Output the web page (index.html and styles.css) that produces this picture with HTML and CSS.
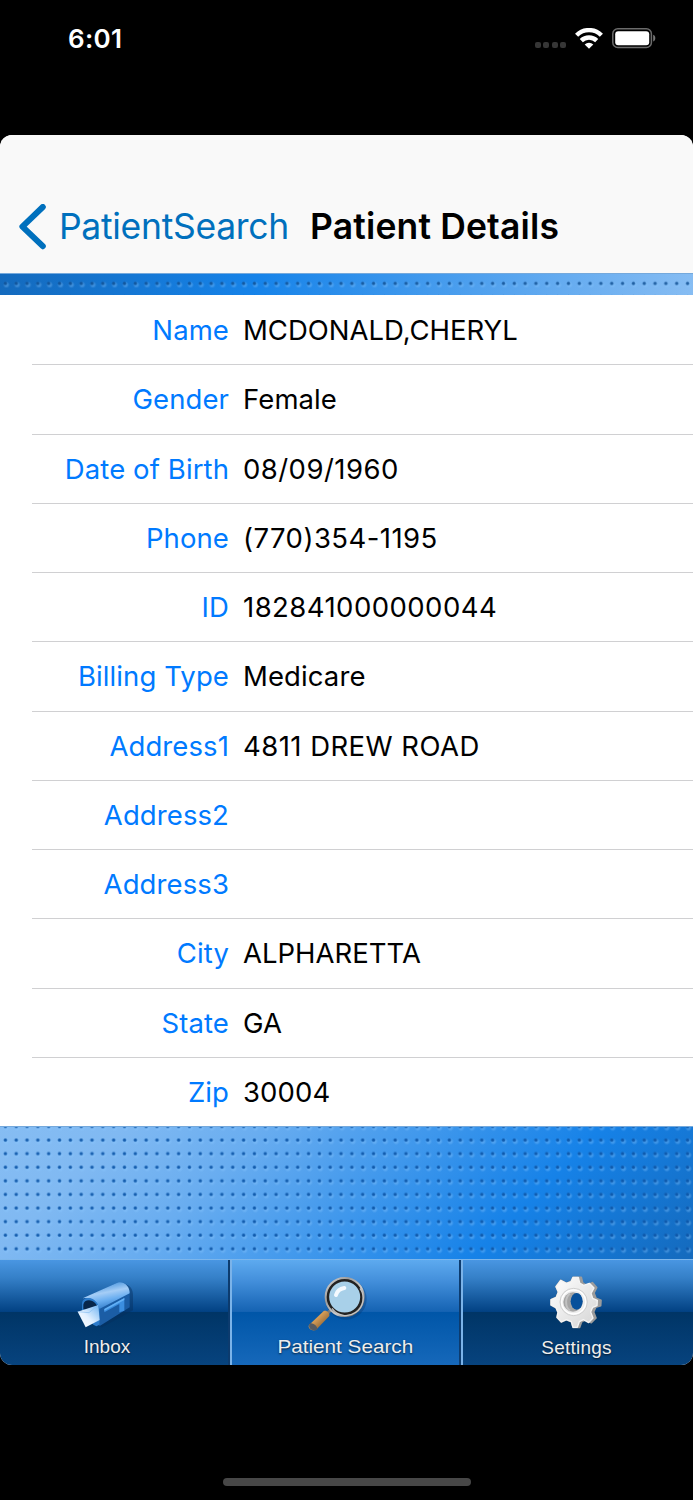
FILE: index.html
```html
<!DOCTYPE html>
<html lang="en">
<head>
    <meta charset="UTF-8">
    <meta name="viewport" content="width=device-width, initial-scale=1.0">
    <title>Patient Details</title>
    <link rel="stylesheet" href="styles.css">
</head>
<body>
    <div class="status-bar">
        <span class="time">6:01</span>
        <div class="status-icons">
            <div class="signal"><i></i><i></i><i></i><i></i></div>
            <svg class="wifi" width="28" height="21" viewBox="0 0 28 21">
                <g fill="none" stroke="#fff" stroke-width="4.4">
                    <path d="M1.6 7.2a17.6 17.6 0 0 1 24.8 0"/>
                    <path d="M6.3 12.6a11 11 0 0 1 15.4 0"/>
                </g>
                <path d="M14 20.8l-4.3-4.4a6.2 6.2 0 0 1 8.6 0z" fill="#fff"/>
            </svg>
            <svg class="battery" width="44" height="21" viewBox="0 0 44 21">
                <rect x=".8" y=".8" width="38.6" height="18.6" rx="5" fill="none" stroke="#6b6b6b" stroke-width="1.5"/>
                <rect x="3.2" y="3.2" width="34" height="14" rx="3" fill="#fff"/>
                <path d="M41.2 6.8c2.8 1 2.8 5.8 0 6.8z" fill="#777"/>
            </svg>
        </div>
    </div>

    <div class="app">
        <header class="nav-bar">
            <svg class="chevron" width="28" height="46" viewBox="0 0 28 46">
                <path d="M23.8 3L3.4 22.6l20.4 19.6" fill="none" stroke="#0070bd" stroke-width="6" stroke-linecap="round" stroke-linejoin="round"/>
            </svg>
            <a class="back">PatientSearch</a>
            <h1>Patient Details</h1>
        </header>
        <div class="band band-top"></div>

        <main class="details">
            <div class="row"><span class="label">Name</span><span class="value caps">MCDONALD,CHERYL</span></div>
            <div class="row"><span class="label">Gender</span><span class="value">Female</span></div>
            <div class="row"><span class="label">Date of Birth</span><span class="value digits">08/09/1960</span></div>
            <div class="row"><span class="label">Phone</span><span class="value digits">(770)354-1195</span></div>
            <div class="row"><span class="label">ID</span><span class="value digits">182841000000044</span></div>
            <div class="row"><span class="label">Billing Type</span><span class="value">Medicare</span></div>
            <div class="row"><span class="label">Address1</span><span class="value digits">4811 DREW ROAD</span></div>
            <div class="row"><span class="label">Address2</span><span class="value"></span></div>
            <div class="row"><span class="label">Address3</span><span class="value"></span></div>
            <div class="row"><span class="label">City</span><span class="value caps">ALPHARETTA</span></div>
            <div class="row"><span class="label">State</span><span class="value">GA</span></div>
            <div class="row"><span class="label">Zip</span><span class="value">30004</span></div>
        </main>

        <div class="band band-bottom"></div>

        <nav class="tab-bar">
            <div class="tab inbox">
                <svg width="60" height="50" viewBox="0 0 180 150">
                    <defs>
                        <linearGradient id="boxTop" x1=".3" y1="0" x2=".65" y2="1">
                            <stop offset="0" stop-color="#2f86d8"/>
                            <stop offset=".4" stop-color="#a5cdf6"/>
                            <stop offset=".65" stop-color="#6aaef0"/>
                            <stop offset="1" stop-color="#2a75c4"/>
                        </linearGradient>
                        <linearGradient id="letter" x1="0" y1="1" x2="1" y2="0">
                            <stop offset="0" stop-color="#fff"/>
                            <stop offset=".45" stop-color="#e3f1ff"/>
                            <stop offset="1" stop-color="#6db2f2"/>
                        </linearGradient>
                    </defs>
                    <path d="M24 72c0-14 10-19 22-18L130 12c22-8 38 10 37 32v44L74 139l-10-4z" fill="#062f5d" opacity=".45" transform="translate(4 3)"/>
                    <path d="M22 70c-2-12 8-19 20-23L124 8c22-7 38 12 37 34v40L70 139V94z" fill="#1b5da5"/>
                    <path d="M20 55L124 8c20-7 38 12 37 32L70 87C66 66 48 50 20 55z" fill="url(#boxTop)"/>
                    <path d="M18 90V71c0-22 31-22 42-6 8 9 11 19 11 31v38l-10 5-9-5z" fill="#2c7bcb"/>
                    <path d="M22 88V74c2-16 25-17 36-4 7 8 9 17 9 30z" fill="#08264a"/>
                    <path d="M5 95l62-20 4 45-42 22z" fill="url(#letter)"/>
                    <path d="M5 95l34 3 28-23" fill="none" stroke="#86bdf0" stroke-width="2"/>
                    <path d="M85 87l60-33v38l-15 5V72L85 97z" fill="#3b8ee0"/>
                    <path d="M85 87l60-33v6L85 92z" fill="#63b0f5"/>
                </svg>
                <span>Inbox</span>
            </div>
            <div class="tab search active">
                <svg width="64" height="58" viewBox="0 0 192 174">
                    <defs>
                        <linearGradient id="rim" x1="0" y1="0" x2="1" y2="1">
                            <stop offset="0" stop-color="#ddd"/>
                            <stop offset=".3" stop-color="#9b9b9b"/>
                            <stop offset=".6" stop-color="#ccc"/>
                            <stop offset="1" stop-color="#333"/>
                        </linearGradient>
                        <linearGradient id="wood" x1="0" y1="0" x2="1" y2="1">
                            <stop offset="0" stop-color="#8a5c2d"/>
                            <stop offset=".4" stop-color="#d39b56"/>
                            <stop offset="1" stop-color="#60401f"/>
                        </linearGradient>
                    </defs>
                    <circle cx="129" cy="72" r="56" fill="none" stroke="#06366f" stroke-width="12" opacity=".35"/>
                    <path d="M88 100L70 119" stroke="#777" stroke-width="9"/>
                    <path d="M62 108c8-4 20 6 17 15l-38 40c-8 9-29-1-23-13z" fill="url(#wood)"/>
                    <path d="M22 144c-13 14 10 29 22 18-2-9-10-16-22-18z" fill="#555a62"/>
                    <circle cx="125" cy="66" r="52" fill="#a8d0e9" stroke="#222" stroke-width="11"/>
                    <circle cx="125" cy="66" r="57" fill="none" stroke="url(#rim)" stroke-width="6"/>
                    <path d="M171 40a50 50 0 0 1-84 60" fill="none" stroke="#c5c5c5" stroke-width="4"/>
                    <path d="M99 60c3-11 12-19 25-21" fill="none" stroke="#f4faff" stroke-width="12" stroke-linecap="round"/>
                </svg>
                <span>Patient Search</span>
            </div>
            <div class="tab settings">
                <svg width="58" height="56" viewBox="0 0 174 168">
                    <defs>
                        <linearGradient id="gear" x1="0" y1="0" x2="1" y2="1">
                            <stop offset="0" stop-color="#fff"/>
                            <stop offset="1" stop-color="#d5d5d5"/>
                        </linearGradient>
                    </defs>
                    <path d="M75 10L100 10L104 27L116 34L133 26L146 41L138 57L144 73L159 79L158 95L143 100L137 114L144 132L130 146L113 137L101 143L95 160L75 160L70 143L55 137L40 144L27 130L30 115L24 101L9 93L9 77L25 70L31 54L24 38L38 19L55 28L69 23Z" fill="#9c9c9c" stroke="#9c9c9c" stroke-width="5" stroke-linejoin="round"/>
                    <path d="M75 10L91 10L95 27L107 34L124 28L138 42L129 58L134 73L148 79L147 95L134 100L128 114L135 132L122 146L106 137L94 143L88 160L75 160L70 143L55 137L40 144L27 130L30 115L24 101L9 93L9 77L25 70L31 54L24 38L38 19L55 28L69 23Z" fill="url(#gear)" stroke="#f4f4f4" stroke-width="4" stroke-linejoin="round"/>
                    <circle cx="77" cy="84" r="41" fill="#ededed" stroke="#cfcfcf" stroke-width="3"/>
                    <circle cx="77" cy="84" r="36" fill="none" stroke="#fff" stroke-width="4"/>
                    <ellipse cx="75" cy="84" rx="29" ry="29" fill="#a5a5a5"/>
                    <ellipse cx="86" cy="82" rx="18" ry="25" fill="#07509b"/>
                    <path d="M66 59c-15 10-16 40 0 51" fill="none" stroke="#c2c2c2" stroke-width="6"/>
                </svg>
                <span>Settings</span>
            </div>
        </nav>
    </div>
    <div class="home-indicator"></div>
</body>
</html>
```
FILE: styles.css
```css
* {
    box-sizing: border-box;
}

body {
    margin: 0;
    background: #000;
    font-family: Inter, "Liberation Sans", sans-serif;
    height: 1500px;
    display: flex;
    flex-direction: column;
    overflow: hidden;
}

.status-bar {
    height: 135px;
    padding: 22px 37px 0 68px;
    display: flex;
    justify-content: space-between;
    align-items: flex-start;
    color: #fff;
}

.time {
    font-size: 26px;
    line-height: 33px;
    font-weight: 600;
    letter-spacing: 0.3px;
}

.status-icons {
    display: flex;
    align-items: flex-start;
    padding-top: 6px;
}

.signal {
    display: flex;
    gap: 2.4px;
    margin: 14px 9px 0 0;
}

.signal i {
    width: 6px;
    height: 6px;
    border-radius: 2px;
    background: #363636;
}

.battery {
    margin-left: 9px;
}

.app {
    height: 1229.6px;
    flex: none;
    border-radius: 12px;
    overflow: hidden;
    display: flex;
    flex-direction: column;
    background: #fff;
}

.nav-bar {
    height: 138px;
    flex: none;
    background: #f9f9f9;
    padding: 69px 0 0 19px;
    display: flex;
    align-items: flex-start;
    font-size: 35.5px;
    line-height: 45px;
}

.back {
    color: #0070bd;
    width: 251px;
    padding-left: 12px;
    white-space: nowrap;
    letter-spacing: -0.3px;
}

h1 {
    margin: 0 0 0 12px;
    font-size: 35.5px;
    line-height: 45px;
    font-weight: 600;
    letter-spacing: 0.15px;
    white-space: nowrap;
}

.band {
    border-top: 1px solid #75a9dc;
    flex: none;
}

.band-top {
    height: 22px;
    background:
        radial-gradient(circle at 5.4px 9.4px, rgba(8, 72, 140, 0.8) 0.9px, transparent 2.3px) 0 0 / 10.83px 13.6px,
        radial-gradient(circle at 6.4px 10.8px, rgba(140, 200, 255, 0.35) 1.5px, transparent 3.4px) 0 0 / 10.83px 13.6px,
        linear-gradient(100deg, #146abd 0%, #1683e9 37%, #87bdf3 100%);
}

.details {
    height: 831px;
    flex: none;
    display: flex;
    flex-direction: column;
}

.row {
    flex: 1;
    margin-left: 32px;
    border-top: 1px solid #d0d0d2;
    display: flex;
    align-items: center;
    font-size: 27.5px;
    letter-spacing: 0.1px;
    white-space: nowrap;
}

.row:first-child {
    border-top-color: transparent;
}

.label {
    width: 197px;
    text-align: right;
    color: #007aff;
}

.value {
    margin-left: 14px;
    color: #000;
}

.caps {
    letter-spacing: 0;
}

.digits {
    letter-spacing: 0.45px;
}

.band-bottom {
    flex: 1;
    background:
        radial-gradient(circle at 5.4px 6px, rgba(8, 82, 165, 0.9) 0.9px, transparent 2.3px) 0 -6.5px / 10.83px 13.6px,
        radial-gradient(circle at 6.4px 7.4px, rgba(140, 200, 255, 0.35) 1.5px, transparent 3.4px) 0 -6.5px / 10.83px 13.6px,
        linear-gradient(135deg, #86bdf3 0%, #80b9f2 15%, #69adf0 32%, #1682e8 73%, #146abd 100%);
}

.tab-bar {
    height: 106px;
    flex: none;
    display: flex;
    border-top: 1px solid #7cb6ec;
    font-family: "Liberation Sans", Arial, sans-serif;
}

.tab {
    width: 231px;
    border-left: 2px solid #7bb3e9;
    border-right: 2px solid #0c3b6e;
    background: linear-gradient(#4996e2 0%, #3580c8 17%, #024284 49%, #003566 50%, #07437e 100%);
    display: flex;
    flex-direction: column;
    align-items: center;
    color: #eee;
    font-size: 19px;
    line-height: 22px;
    text-shadow: 0 1px 2px rgba(0, 0, 0, 0.7);
}

.tab span {
    margin-top: auto;
    margin-bottom: 7px;
}

.inbox {
    width: 230px;
    border-left: none;
    padding-right: 14px;
}

.inbox svg {
    margin: 20px 3px 0 0;
}

.search svg {
    margin: 15px 22px 0 0;
}

.search span {
    transform: scaleX(1.09);
}

.active {
    background: linear-gradient(#5daaef 0%, #438fdb 20%, #1563b3 49%, #0056a8 50%, #1668ba 100%);
}

.settings {
    width: 232px;
    border-right: none;
    padding-right: 3px;
}

.settings svg {
    margin-top: 14px;
}

.settings span {
    margin-bottom: 6px;
    letter-spacing: 0.2px;
}

.home-indicator {
    width: 248px;
    height: 8px;
    flex: none;
    margin: 113.4px auto 0;
    border-radius: 4px;
    background: #474747;
}
```
